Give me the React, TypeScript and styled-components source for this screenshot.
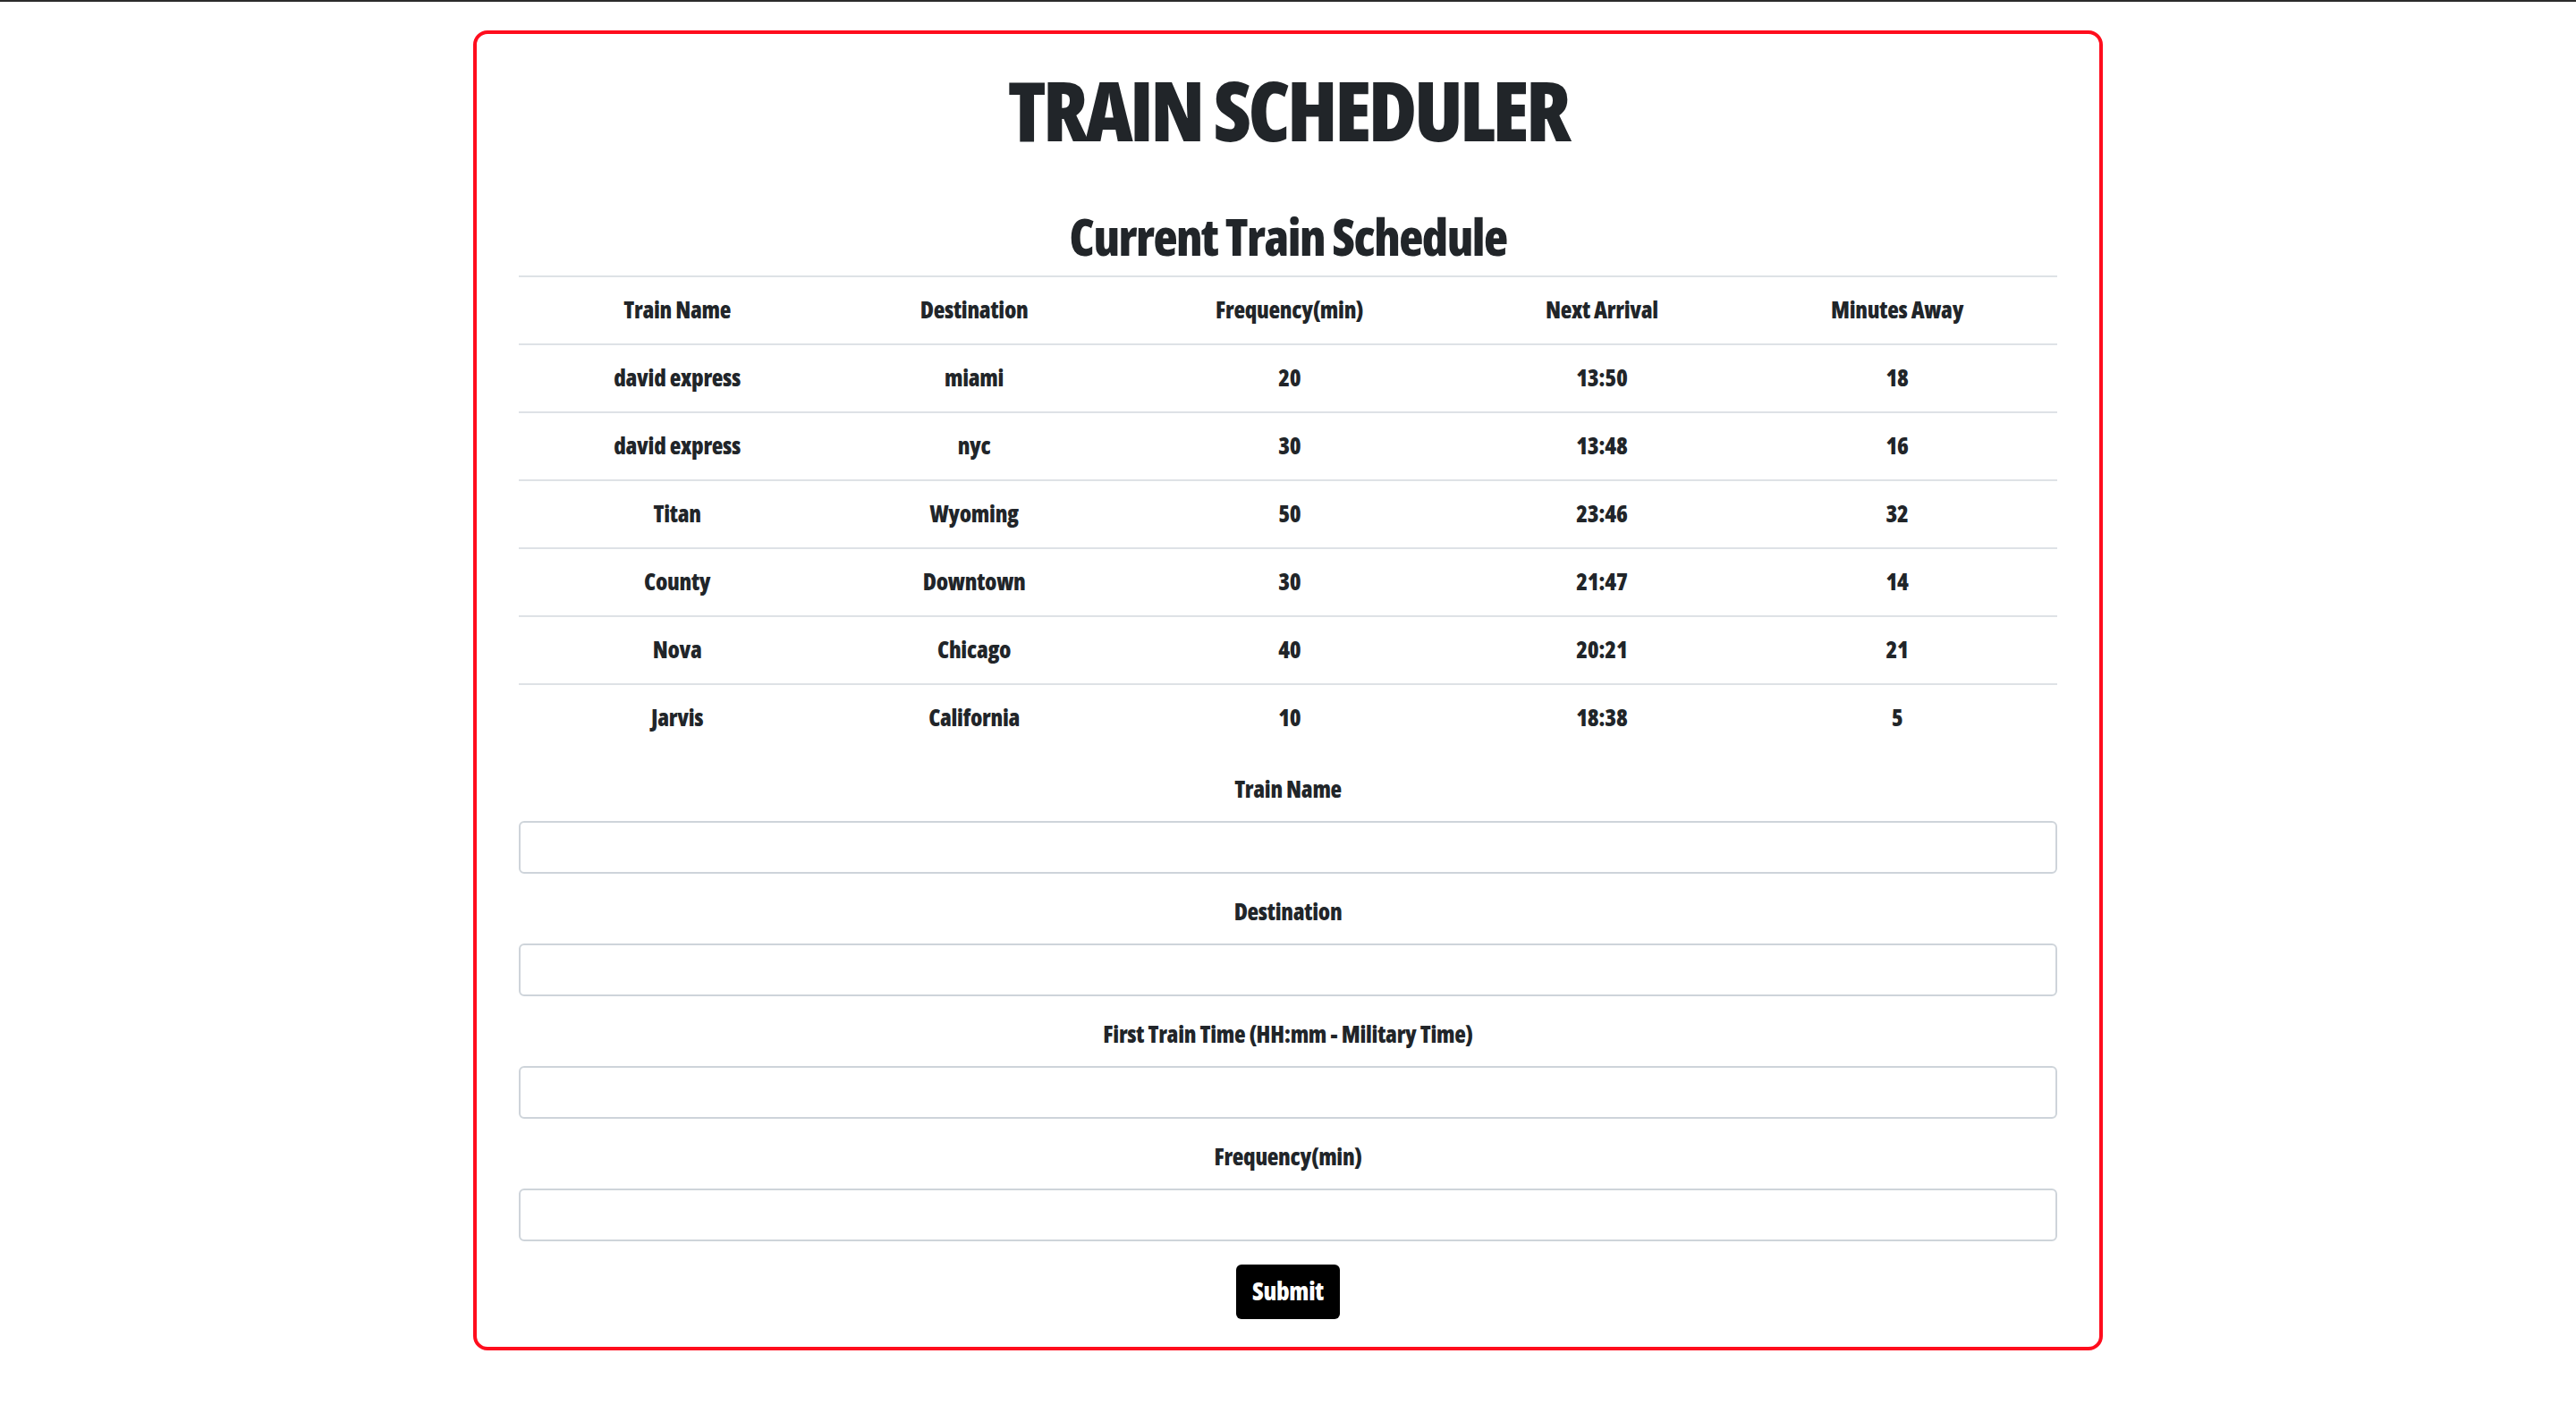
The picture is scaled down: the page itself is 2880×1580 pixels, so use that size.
import styled, { createGlobalStyle } from "styled-components";

const GlobalStyle = createGlobalStyle`
  html, body {
    margin: 0;
    padding: 0;
    background: #ffffff;
  }
  body {
    border-top: 2px solid #2b2b2b;
    color: #212529;
    font-family: Impact, "Open Sans", "Roboto", "Liberation Sans", sans-serif;
    font-stretch: 75%;
    font-weight: 800;
  }
  * {
    box-sizing: border-box;
  }
`;

const Page = styled.main`
  padding-top: 32px;
`;

const Card = styled.section`
  width: 1822px;
  margin: 0 auto;
  padding: 0 47px 31px;
  border: 4px solid #ff0d1d;
  border-radius: 16px;
`;

const Title = styled.h1`
  margin: 26px 0 0;
  font-size: 93px;
  line-height: 116px;
  letter-spacing: -3.5px;
  text-align: center;
  font-weight: 800;
`;

const SubTitle = styled.h2`
  margin: 48px 0 8px;
  font-size: 56px;
  line-height: 72px;
  letter-spacing: -1.5px;
  text-align: center;
  font-weight: 800;
`;

const Table = styled.table`
  width: 100%;
  margin-bottom: 25px;
  border-collapse: separate;
  border-spacing: 0;
  table-layout: fixed;
`;

const Cell = styled.td`
  padding: 0 0 2px;
  border-top: 2px solid #dee2e6;
  font-size: 26px;
  line-height: 72px;
  letter-spacing: -0.3px;
  text-align: center;
  font-weight: 800;
  white-space: nowrap;
`;

const HeadCell = styled(Cell).attrs({ as: "th" })``;

const FormGroup = styled.div`
  display: flex;
  flex-direction: column;
  margin-bottom: 25px;
`;

const Label = styled.label`
  margin-bottom: 17px;
  font-size: 26px;
  line-height: 34px;
  padding-bottom: 2px;
  letter-spacing: -0.3px;
  text-align: center;
`;

const Input = styled.input`
  width: 100%;
  height: 59px;
  padding: 9px 18px;
  border: 2px solid #ced4da;
  border-radius: 6px;
  font-size: 24px;
  font-family: inherit;
  color: #495057;
  background: #fff;
`;

const SubmitRow = styled.div`
  display: flex;
  justify-content: center;
  padding-top: 1px;
`;

const SubmitButton = styled.button`
  width: 116px;
  height: 61px;
  padding: 0 0 3px;
  border: none;
  border-radius: 6px;
  background: #000;
  color: #fff;
  font-family: inherit;
  font-stretch: 75%;
  font-size: 28px;
  font-weight: 800;
  letter-spacing: -0.3px;
  cursor: pointer;
`;

const columns = [
  { label: "Train Name", width: "20.6%" },
  { label: "Destination", width: "18%" },
  { label: "Frequency(min)", width: "23%" },
  { label: "Next Arrival", width: "17.6%" },
  { label: "Minutes Away", width: "20.8%" },
];

const trains = [
  ["david express", "miami", "20", "13:50", "18"],
  ["david express", "nyc", "30", "13:48", "16"],
  ["Titan", "Wyoming", "50", "23:46", "32"],
  ["County", "Downtown", "30", "21:47", "14"],
  ["Nova", "Chicago", "40", "20:21", "21"],
  ["Jarvis", "California", "10", "18:38", "5"],
];

const fields = [
  { id: "train-name", label: "Train Name" },
  { id: "destination", label: "Destination" },
  { id: "first-train", label: "First Train Time (HH:mm - Military Time)" },
  { id: "frequency", label: "Frequency(min)" },
];

const App = () => {
  return (
    <>
      <GlobalStyle />
      <Page>
        <Card>
          <Title>TRAIN SCHEDULER</Title>
          <SubTitle>Current Train Schedule</SubTitle>
          <Table>
            <colgroup>
              {columns.map((col) => (
                <col key={col.label} style={{ width: col.width }} />
              ))}
            </colgroup>
            <thead>
              <tr>
                {columns.map((col) => (
                  <HeadCell key={col.label}>{col.label}</HeadCell>
                ))}
              </tr>
            </thead>
            <tbody>
              {trains.map((row, i) => (
                <tr key={row[0] + i}>
                  {row.map((value, j) => (
                    <Cell key={j}>{value}</Cell>
                  ))}
                </tr>
              ))}
            </tbody>
          </Table>
          <form onSubmit={(e) => e.preventDefault()}>
            {fields.map((field) => (
              <FormGroup key={field.id}>
                <Label htmlFor={field.id}>{field.label}</Label>
                <Input id={field.id} type="text" />
              </FormGroup>
            ))}
            <SubmitRow>
              <SubmitButton type="submit">Submit</SubmitButton>
            </SubmitRow>
          </form>
        </Card>
      </Page>
    </>
  );
};

export default App;
